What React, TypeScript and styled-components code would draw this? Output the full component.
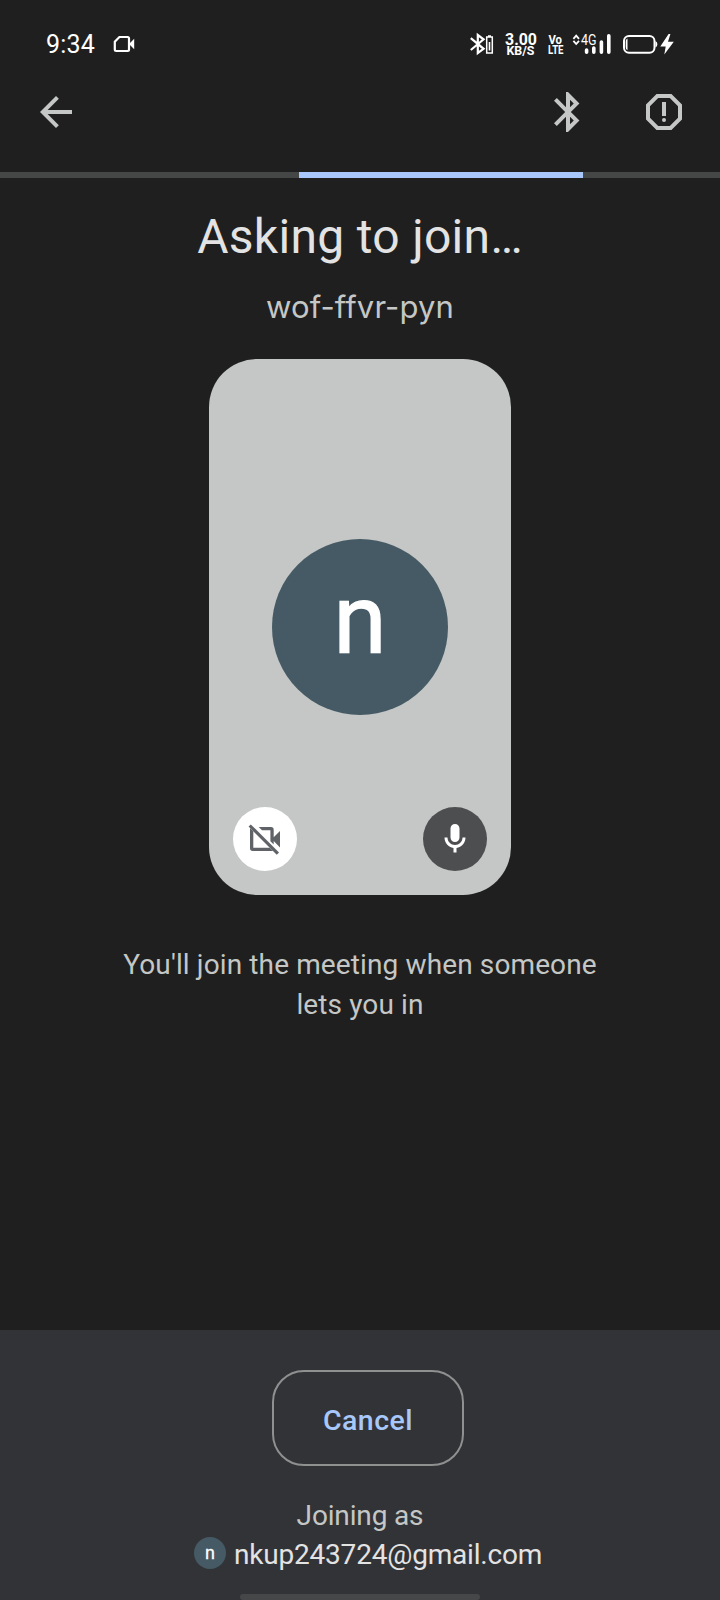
import React from 'react';
import styled, { createGlobalStyle } from 'styled-components';

const GlobalStyle = createGlobalStyle`
  * { box-sizing: border-box; }
  body { margin: 0; background: #1f1f1f; font-family: Roboto, sans-serif; }
`;

const Screen = styled.div`
  width: 720px;
  height: 1600px;
  display: flex;
  flex-direction: column;
  overflow: hidden;
  background: #1f1f1f;
`;

const Icon = styled.svg`
  display: block;
  flex: none;
  fill: currentColor;
`;

const StatusBar = styled.header`
  height: 88px;
  padding: 28px 44px 0 46px;
  display: flex;
  align-items: flex-start;
  justify-content: space-between;
  color: #fff;
`;

const StatusGroup = styled.div`
  padding-top: 4px;
  display: flex;
  align-items: flex-start;
`;

const Clock = styled.time`
  width: 67px;
  padding-top: 1px;
  font-size: 25px;
  line-height: 24px;
  letter-spacing: 0.2px;
`;

const AppBar = styled.nav`
  height: 84px;
  padding: 0 32px;
  display: flex;
  align-items: flex-start;
  justify-content: space-between;
  color: #c4c7c5;
`;

const Actions = styled.div`
  display: flex;
  gap: 48px;
`;

const IconButton = styled.button`
  padding: 0;
  border: 0;
  background: none;
  color: inherit;
`;

const ProgressTrack = styled.div`
  height: 6px;
  padding-left: 299px;
  flex: none;
  background: #444746;
`;

const ProgressSegment = styled.div`
  width: 283.5px;
  height: 6px;
  background: #a8c7fa;
`;

const Main = styled.main`
  flex: 1;
  padding-top: 31px;
  display: flex;
  flex-direction: column;
  align-items: center;
  text-align: center;
`;

const Title = styled.h1`
  margin: 0;
  font-size: 48px;
  font-weight: 400;
  line-height: 56px;
  letter-spacing: 0.3px;
  color: #e3e3e3;
`;

const MeetingCode = styled.p`
  margin: 22px 0 32px;
  font-family: Inter, sans-serif;
  font-size: 31px;
  line-height: 40px;
  letter-spacing: 0.15px;
  color: #c4c7c5;
`;

const Preview = styled.section`
  width: 302px;
  height: 536px;
  padding: 180px 24px 24px;
  display: flex;
  flex-direction: column;
  align-items: center;
  justify-content: space-between;
  border-radius: 48px;
  background: #c4c7c5;
`;

const Avatar = styled.div<{ $size: number; $font: number; $lift: number }>`
  width: ${p => p.$size}px;
  height: ${p => p.$size}px;
  padding-bottom: ${p => p.$lift}px;
  flex: none;
  display: flex;
  align-items: center;
  justify-content: center;
  border-radius: 50%;
  background: #455a64;
  color: #fff;
  font-size: ${p => p.$font}px;
  font-weight: 400;
  line-height: 1;
  -webkit-text-stroke: 0.014em #fff;
`;

const Controls = styled.div`
  width: 100%;
  display: flex;
  justify-content: space-between;
`;

const RoundButton = styled.button<{ $off?: boolean }>`
  width: 64px;
  height: 64px;
  padding: 0;
  display: flex;
  align-items: center;
  justify-content: center;
  border: 0;
  border-radius: 50%;
  background: ${p => (p.$off ? '#fff' : '#4d4e50')};
  color: ${p => (p.$off ? '#5f6368' : '#fff')};
`;

const Message = styled.p`
  width: 520px;
  margin: 50px 0 0;
  font-size: 28px;
  line-height: 40px;
  letter-spacing: 0.12px;
  color: #c4c7c5;
`;

const Footer = styled.footer`
  height: 270px;
  padding-top: 40px;
  flex: none;
  display: flex;
  flex-direction: column;
  align-items: center;
  background: #323337;
`;

const CancelButton = styled.button`
  width: 192px;
  height: 96px;
  margin-left: 16px;
  padding: 4px 0 0;
  flex: none;
  border: 2px solid #8e918f;
  border-radius: 32px;
  background: none;
  color: #a8c7fa;
  font: 500 28.5px Roboto, sans-serif;
  letter-spacing: 0.5px;
`;

const JoiningLabel = styled.div`
  margin-top: 30px;
  font-size: 28px;
  line-height: 40px;
  letter-spacing: -0.15px;
  color: #c4c7c5;
`;

const Account = styled.div`
  margin-left: 16px;
  height: 39px;
  padding-top: 1px;
  display: flex;
  gap: 8px;
`;

const Email = styled.span`
  margin-top: -2px;
  font-size: 28px;
  line-height: 40px;
  letter-spacing: -0.2px;
  color: #e3e3e3;
`;

const HomeIndicator = styled.div`
  width: 240px;
  height: 6px;
  margin-top: 19px;
  flex: none;
  border-radius: 3px;
  background: #464749;
`;

function StatusIcons() {
  return (
    <Icon width="216" height="32" viewBox="460 28 216 32" fontFamily="Roboto, sans-serif" fontWeight="700">
      <path d="M470.8 38.2 483.6 48.8 477.8 53V35L483.6 39.4 470.8 50" fill="none" stroke="currentColor" strokeWidth="2.2" />
      <path d="M486.7 37h5.6v16h-5.6zM488 36h3" fill="none" stroke="currentColor" strokeWidth="1.5" />
      <path d="M488.7 42h1.6v8.5h-1.6z" />
      <text x="505" y="44.5" fontSize="16.5" textLength="32" lengthAdjust="spacingAndGlyphs">3.00</text>
      <text x="506.5" y="55" fontSize="12" textLength="28" lengthAdjust="spacingAndGlyphs">KB/S</text>
      <text x="548.5" y="43.8" fontSize="13" textLength="13.5" lengthAdjust="spacingAndGlyphs">Vo</text>
      <text x="548" y="54" fontSize="13" textLength="15.5" lengthAdjust="spacingAndGlyphs">LTE</text>
      <path d="m573.4 38.8 2.8-3.2 2.8 3.2M573.4 40.8l2.8 3.2 2.8-3.2" fill="none" stroke="currentColor" strokeWidth="1.8" />
      <text x="581" y="45" fontSize="14.5" fontWeight="400" textLength="15.5" lengthAdjust="spacingAndGlyphs">4G</text>
      <g stroke="currentColor" strokeWidth="3.6" strokeLinecap="round">
        <path d="M586.6 50v2.2M593.8 48v4.2M601.4 42v10.2M608.8 35.8v16.4" />
      </g>
      <rect x="624" y="36" width="30.5" height="16.8" rx="5" fill="none" stroke="currentColor" strokeWidth="2" />
      <path d="M627.5 38.5v11.8a3 3 0 0 1-1.8-3v-5.8a3 3 0 0 1 1.8-3zM655.4 41q2 1 2 3.3t-2 3.3z" />
      <path d="M668.6 34 660.3 46.4h5.4l-1.4 8 9.5-12.7h-5.8l2.4-7.7z" />
    </Icon>
  );
}

export default function App() {
  return (
    <>
      <GlobalStyle />
      <Screen>
        <StatusBar>
          <StatusGroup>
            <Clock>9:34</Clock>
            <Icon width="22" height="24" viewBox="113 32 22 24">
              <path d="M119.4 37h8.2q1.4 0 1.4 1.4v11.2q0 1.4-1.4 1.4h-11.4q-1.4 0-1.4-1.4v-8z" fill="none" stroke="currentColor" strokeWidth="2.2" />
              <path d="m129 44 5.2-5.2v10.4z" />
            </Icon>
          </StatusGroup>
          <StatusIcons />
        </StatusBar>
        <AppBar>
          <IconButton aria-label="Back">
            <Icon width="48" height="48" viewBox="0 0 24 24">
              <path d="M20 11H7.83l5.59-5.59L12 4l-8 8 8 8 1.41-1.41L7.83 13H20v-2z" />
            </Icon>
          </IconButton>
          <Actions>
            <IconButton aria-label="Audio output">
              <Icon width="48" height="48" viewBox="0 0 24 24">
                <path d="M17.71 7.71 12 2h-1v7.59L6.41 5 5 6.41 10.59 12 5 17.59 6.41 19 11 14.41V22h1l5.71-5.71-4.3-4.29 4.3-4.29zM13 5.83l1.88 1.88L13 9.59V5.83zm1.88 10.46L13 18.17v-3.76l1.88 1.88z" />
              </Icon>
            </IconButton>
            <IconButton aria-label="Report a problem">
              <Icon width="48" height="48" viewBox="0 0 24 24">
                <path d="M15.73 3H8.27L3 8.27v7.46L8.27 21h7.46L21 15.73V8.27L15.73 3zM19 14.9 14.9 19H9.1L5 14.9V9.1L9.1 5h5.8L19 9.1v5.8zM11 7h2v7h-2z" />
                <circle cx="12" cy="16" r="1" />
              </Icon>
            </IconButton>
          </Actions>
        </AppBar>
        <ProgressTrack>
          <ProgressSegment />
        </ProgressTrack>
        <Main>
          <Title>Asking to join…</Title>
          <MeetingCode>wof-ffvr-pyn</MeetingCode>
          <Preview>
            <Avatar $size={176} $font={96} $lift={14}>n</Avatar>
            <Controls>
              <RoundButton $off aria-label="Turn on camera">
                <Icon width="36" height="36" viewBox="0 0 24 24">
                  <path d="M7.8 4H16q1.8 0 1.8 1.8v5L22 6.6v11l-4.2-4.2v2.3l-2.2-2.2V6.2h-5.6z" />
                  <path d="M2 4.6 4.2 6.8v11h11l2.2 2.2H3.8Q2 20 2 18.2z" />
                  <path d="M1.8 3 20.6 21.8" fill="none" stroke="currentColor" strokeWidth="2.1" />
                </Icon>
              </RoundButton>
              <RoundButton aria-label="Mute microphone">
                <Icon width="36" height="36" viewBox="0 0 24 24">
                  <path d="M12 14c1.66 0 3-1.34 3-3V5c0-1.66-1.34-3-3-3S9 3.34 9 5v6c0 1.66 1.34 3 3 3zM17 11c0 2.76-2.24 5-5 5s-5-2.24-5-5H5c0 3.53 2.61 6.43 6 6.92V21h2v-3.08c3.39-.49 6-3.39 6-6.92h-2z" />
                </Icon>
              </RoundButton>
            </Controls>
          </Preview>
          <Message>
            You'll join the meeting when someone
            <br />
            lets you in
          </Message>
        </Main>
        <Footer>
          <CancelButton>Cancel</CancelButton>
          <JoiningLabel>Joining as</JoiningLabel>
          <Account>
            <Avatar $size={32} $font={18} $lift={1}>n</Avatar>
            <Email>nkup243724@gmail.com</Email>
          </Account>
          <HomeIndicator />
        </Footer>
      </Screen>
    </>
  );
}
